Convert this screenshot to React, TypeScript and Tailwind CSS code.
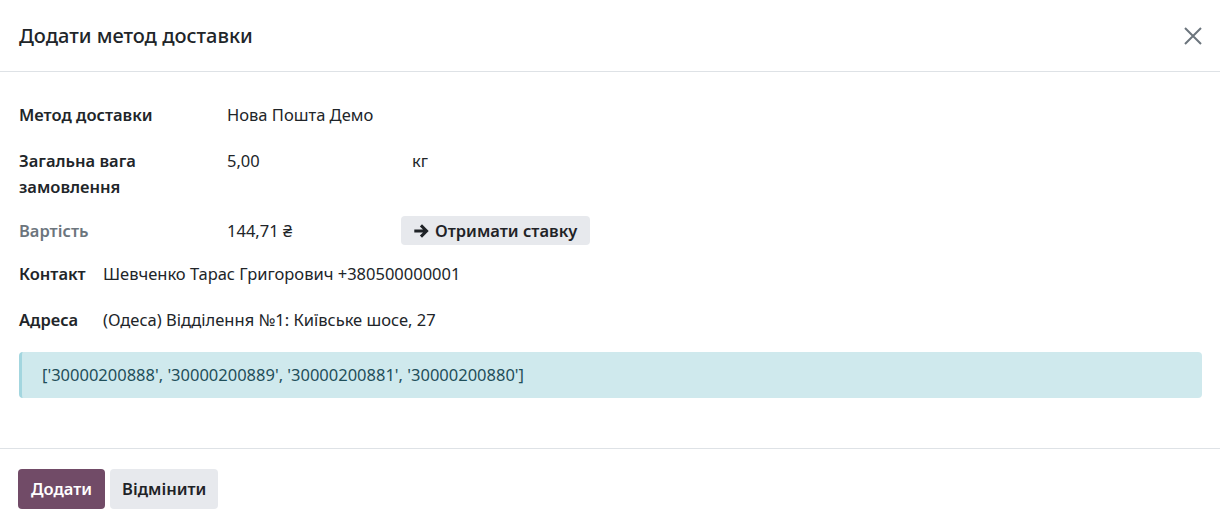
const font = "font-['Segoe_UI','Noto_Sans',sans-serif]"

function Row({ label, muted, children, labelW = 'w-[208px]', top = false }: { label: React.ReactNode; muted?: boolean; children: React.ReactNode; labelW?: string; top?: boolean }) {
  return (
    <div className={`flex ${top ? 'items-start' : 'items-center'}`}>
      <div className={`${labelW} shrink-0 font-semibold leading-[26px] ${muted ? 'text-[#6c757d]' : 'text-[#212529]'}`}>{label}</div>
      <div className="flex-1 leading-[26px]">{children}</div>
    </div>
  )
}

export default function App() {
  return (
    <div className={`w-[1220px] h-[527px] bg-white text-[#212529] text-[16.5px] overflow-hidden ${font}`}>
      {/* шапка */}
      <header className="h-[72px] flex items-center justify-between pl-[19px] pr-[18px] border-b border-[#dee2e6]">
        <h1 className="text-[20px] font-medium">Додати метод доставки</h1>
        <button className="text-[#6c757d]">
          <svg width="18" height="18" viewBox="0 0 18 18" stroke="currentColor" strokeWidth="2" fill="none">
            <path d="M1 1 L17 17 M17 1 L1 17" />
          </svg>
        </button>
      </header>

      {/* тіло */}
      <div className="pl-[19px] pr-[18px] pt-[30px] pb-[50px] flex flex-col">
        <Row label="Метод доставки">Нова Пошта Демо</Row>
        <div className="h-[20px]" />
        <Row label={<>Загальна вага<br />замовлення</>} top>
          <div className="flex">
            <span className="w-[185px]">5,00</span>
            <span>кг</span>
          </div>
        </Row>
        <div className="h-[16px]" />
        <Row label="Вартість" muted>
          <div className="flex items-center">
            <span className="w-[174px]">144,71 ₴</span>
            <button className="flex items-center gap-[6px] bg-[#e7e9ed] rounded-[4px] h-[29px] px-[13px] font-semibold text-[#1f2327]">
              <svg width="15" height="14" viewBox="0 0 15 14" fill="currentColor">
                <path d="M8 0.3 L14.7 7 L8 13.7 L5.9 11.6 L9 8.6 H0.3 V5.4 H9 L5.9 2.4 Z" />
              </svg>
              Отримати ставку
            </button>
          </div>
        </Row>
        <div className="h-[16px]" />
        <Row label="Контакт" labelW="w-[84px]">Шевченко Тарас Григорович +380500000001</Row>
        <div className="h-[20px]" />
        <Row label="Адреса" labelW="w-[84px]">(Одеса) Відділення №1: Київське шосе, 27</Row>
        <div className="h-[19px]" />
        <div className="h-[46px] flex items-center pl-[20px] bg-[#cfe9ed] border-l-[3px] border-[#a3d6df] rounded-[4px] text-[#1f4f5a]">
          ['30000200888', '30000200889', '30000200881', '30000200880']
        </div>
      </div>

      {/* підвал */}
      <footer className="border-t border-[#dee2e6] pt-[20px] pl-[18px] flex gap-[5px]">
        <button className="h-[40px] px-[13px] rounded-[4px] bg-[#714b67] text-white font-semibold">Додати</button>
        <button className="h-[40px] px-[12px] rounded-[4px] bg-[#e7e9ed] text-[#1f2327] font-semibold">Відмінити</button>
      </footer>
    </div>
  )
}
